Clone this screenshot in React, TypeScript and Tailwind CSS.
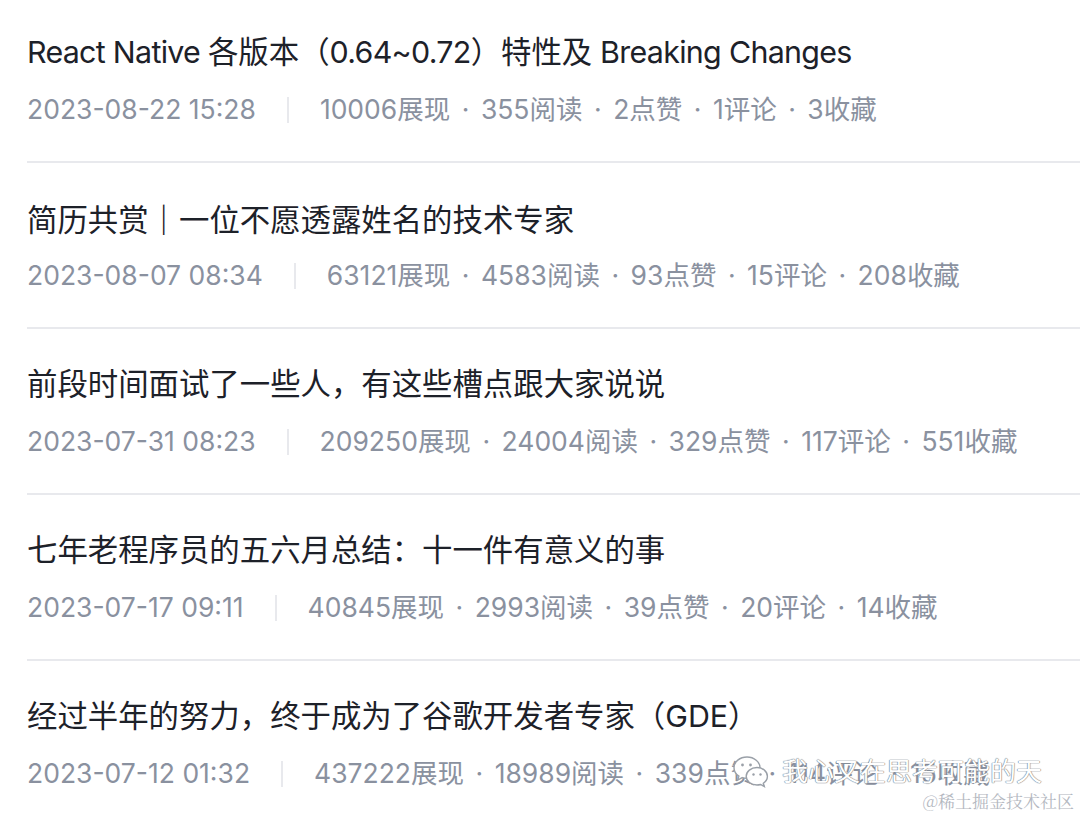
import React from 'react';

type Article = {
  title: React.ReactNode;
  date: string;
  views: string;
  reads: string;
  likes: string;
  comments: string;
  stars: string;
};

// Inter runs a bit wider than the original's latin face
const Latin = ({ children }: { children: React.ReactNode }) => (
  <span className="tracking-[-0.7px]">{children}</span>
);

const articles: Article[] = [
  {
    title: (
      <>
        <Latin>React Native </Latin>各版本（<Latin>0.64~0.72</Latin>）特性及<Latin> Breaking Changes</Latin>
      </>
    ),
    date: '2023-08-22 15:28',
    views: '10006',
    reads: '355',
    likes: '2',
    comments: '1',
    stars: '3',
  },
  {
    title: (
      <>
        简历共赏
        <span className="font-bold" style={{ fontFamily: '"Noto Sans CJK SC", sans-serif' }}>
          ｜
        </span>
        一位不愿透露姓名的技术专家
      </>
    ),
    date: '2023-08-07 08:34',
    views: '63121',
    reads: '4583',
    likes: '93',
    comments: '15',
    stars: '208',
  },
  {
    title: '前段时间面试了一些人，有这些槽点跟大家说说',
    date: '2023-07-31 08:23',
    views: '209250',
    reads: '24004',
    likes: '329',
    comments: '117',
    stars: '551',
  },
  {
    title: '七年老程序员的五六月总结：十一件有意义的事',
    date: '2023-07-17 09:11',
    views: '40845',
    reads: '2993',
    likes: '39',
    comments: '20',
    stars: '14',
  },
  {
    title: '经过半年的努力，终于成为了谷歌开发者专家（GDE）',
    date: '2023-07-12 01:32',
    views: '437222',
    reads: '18989',
    likes: '339',
    comments: '114',
    stars: '15',
  },
];

const WechatIcon = () => (
  <svg width="38" height="36" viewBox="0 0 38 36" fill="none">
    <path
      d="M15 3C7.8 3 2 7.8 2 13.7c0 3.4 1.9 6.4 4.9 8.4l-1.2 3.9 4.6-2.4c1.5.4 3 .6 4.7.6 7.2 0 13-4.8 13-10.5S22.2 3 15 3z"
      fill="white"
      stroke="#9aa0a8"
      strokeWidth="1.4"
    />
    <circle cx="10.5" cy="11" r="1.4" fill="#9aa0a8" />
    <circle cx="18.5" cy="11" r="1.4" fill="#9aa0a8" />
    <path
      d="M25 13.5c-6 0-10.8 4-10.8 8.8S19 31 25 31c1.3 0 2.5-.2 3.6-.5l3.7 2-1-3.2c2.5-1.6 4.1-4.1 4.1-7C35.4 17.5 30.8 13.5 25 13.5z"
      fill="white"
      stroke="#9aa0a8"
      strokeWidth="1.4"
    />
    <circle cx="21.5" cy="20.5" r="1.2" fill="#9aa0a8" />
    <circle cx="28.5" cy="20.5" r="1.2" fill="#9aa0a8" />
  </svg>
);

const Dot = () => <span className="mx-[11.5px]">·</span>;

const ArticleRow = ({ item }: { item: Article }) => (
  <div className="flex flex-col pt-[35px] first:pt-[32px] pb-[33px] border-b-2 border-[#e8e9ed]">
    <div className="h-[40px] leading-[40px] text-[30.4px] text-[#1d2129] whitespace-nowrap">{item.title}</div>
    <div className="mt-[20px] h-[36px] flex items-center text-[26.5px] text-[#8a919f] whitespace-nowrap">
      <span>{item.date}</span>
      <span className="mx-[31px] w-[2px] h-[26px] bg-[#e8e9ed]" />
      <span>{item.views}展现</span>
      <Dot />
      <span>{item.reads}阅读</span>
      <Dot />
      <span>{item.likes}点赞</span>
      <Dot />
      <span>{item.comments}评论</span>
      <Dot />
      <span>{item.stars}收藏</span>
    </div>
  </div>
);

export default function App() {
  return (
    <div
      className="relative w-[1080px] h-[816px] overflow-hidden bg-white pl-[27px]"
      style={{ fontFamily: 'Inter, "Noto Sans CJK SC", sans-serif' }}
    >
      <div className="flex flex-col">
        {articles.map((a) => (
          <ArticleRow key={a.date} item={a} />
        ))}
      </div>

      <div className="absolute left-[732px] top-[752px] flex items-center gap-[12px]">
        <WechatIcon />
        <span
          className="text-[26px] text-white whitespace-nowrap"
          style={{ textShadow: '0 0 1px #7d838c, 0 0 1px #7d838c, 0 0 1px #7d838c' }}
        >
          我心又在思考可能的天
        </span>
      </div>
      <div
        className="absolute right-[6px] top-[788px] text-[17px] text-[#b4b8bf] whitespace-nowrap"
        style={{ fontFamily: '"Noto Serif CJK SC", "Noto Sans CJK SC", serif' }}
      >
        @稀土掘金技术社区
      </div>
    </div>
  );
}
